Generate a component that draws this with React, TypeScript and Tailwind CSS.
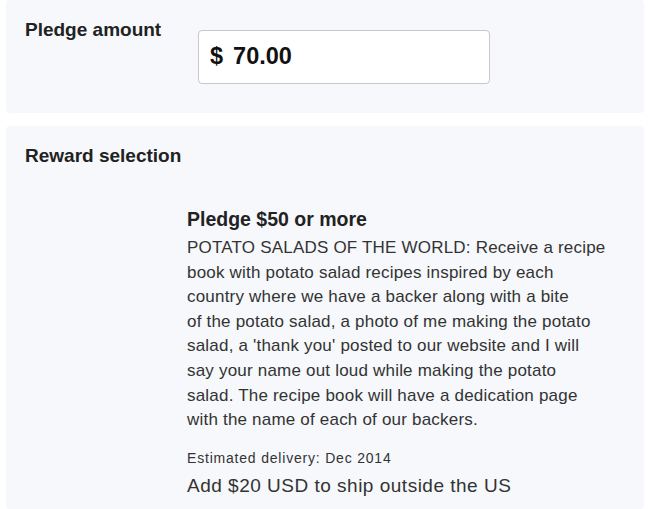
const rewardLines = [
  "POTATO SALADS OF THE WORLD: Receive a recipe",
  "book with potato salad recipes inspired by each",
  "country where we have a backer along with a bite",
  "of the potato salad, a photo of me making the potato",
  "salad, a 'thank you' posted to our website and I will",
  "say your name out loud while making the potato",
  "salad. The recipe book will have a dedication page",
  "with the name of each of our backers.",
];

export default function App() {
  return (
    <div className="min-h-[509px] w-[650px] bg-white font-['Liberation_Sans',Arial,sans-serif] text-[#222]">
      <div className="mx-[6px] flex h-[113px] rounded-[4px] bg-[#f6f8fb]">
        <div className="w-[192px] pl-[19px] pt-[19px] text-[19px] font-bold leading-[22px] text-[#222]">
          Pledge amount
        </div>
        <div className="pt-[30px]">
          <div className="flex h-[54px] w-[292px] items-center rounded-[4px] border border-[#c8c8c8] bg-white pl-[11px] text-[23.5px] font-bold text-[#111]">
            <span>$</span>
            <span className="ml-[10px]">70.00</span>
          </div>
        </div>
      </div>
      <div className="mx-[6px] mt-[13px] min-h-[383px] rounded-[4px] bg-[#f6f8fb] pl-[19px] pt-[19px]">
        <div className="text-[19px] font-bold leading-[22px] text-[#222]">Reward selection</div>
        <div className="ml-[162px] mt-[40px] w-[440px]">
          <div className="text-[19.5px] font-bold leading-[24px] text-[#222]">Pledge $50 or more</div>
          <p className="mt-[5px] text-[17px] leading-[24.6px] tracking-[0.2px] text-[#333]">
            {rewardLines.map((line, i) => (
              <span key={i} className="block whitespace-nowrap">
                {line}
              </span>
            ))}
          </p>
          <div className="mt-[16px] text-[14px] leading-[18px] tracking-[0.8px] text-[#333]">
            Estimated delivery: Dec 2014
          </div>
          <div className="mt-[7px] text-[19px] leading-[24px] tracking-[0.5px] text-[#333]">
            Add $20 USD to ship outside the US
          </div>
        </div>
      </div>
    </div>
  );
}
